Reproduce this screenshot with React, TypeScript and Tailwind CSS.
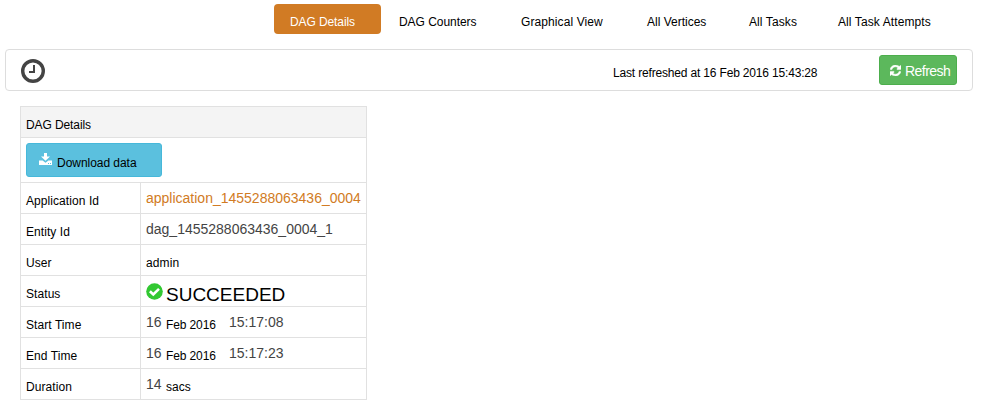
import type { ReactNode } from 'react';

const tabs = [
  { label: 'DAG Counters', box: 'w-[122px] pl-[18px] tracking-[-0.05px]' },
  { label: 'Graphical View', box: 'w-[126px] pl-[18px] tracking-[0.1px]' },
  { label: 'All Vertices', box: 'w-[102px] pl-[18px]' },
  { label: 'All Tasks', box: 'w-[89px] pl-[18px] tracking-[0.1px]' },
  { label: 'All Task Attempts', box: 'w-[120px] pl-[18px] tracking-[0.1px]' },
];

function ClockIcon() {
  return (
    <svg className="size-6" viewBox="0 0 24 24" fill="none" stroke="#444" strokeWidth="3.4">
      <circle cx="12" cy="12" r="10.3" />
      <path d="M13 6v8M8 13h6" strokeWidth="2" />
    </svg>
  );
}

function RefreshIcon() {
  return (
    <svg className="h-[11px] w-[11px]" viewBox="0 0 1536 1536" fill="currentColor" stroke="currentColor" strokeWidth="70">
      <path d="M1511 928q0 5-1 7-64 268-268 434.5t-478 166.5q-146 0-282.5-55t-243.5-157l-129 129q-19 19-45 19t-45-19-19-45v-448q0-26 19-45t45-19h448q26 0 45 19t19 45-19 45l-137 137q71 66 161 102t187 36q134 0 250-65t186-179q11-17 53-117 8-23 30-23h192q13 0 22.5 9.5t9.5 22.5zm25-800v448q0 26-19 45t-45 19h-448q-26 0-45-19t-19-45 19-45l138-138q-148-137-349-137-134 0-250 65t-186 179q-11 17-53 117-8 23-30 23h-199q-13 0-22.5-9.5t-9.5-22.5v-7q65-268 270-434.5t480-166.5q146 0 284 55.5t245 156.5l130-129q19-19 45-19t45 19 19 45z" />
    </svg>
  );
}

function DownloadIcon() {
  return (
    <svg className="h-3 w-[13px]" viewBox="0 0 13 12" fill="currentColor">
      <path d="M5 0h3v3.5h3L6.5 7.8 2 3.5h3z" />
      <path fillRule="evenodd" d="M0 7.5h3.6l2.9 2.3 2.9-2.3H13V12H0zM9 10v1h1v-1zm2 0v1h1v-1z" />
    </svg>
  );
}

function CheckIcon() {
  return (
    <svg className="size-[17px]" viewBox="0 0 17 17">
      <circle cx="8.5" cy="8.5" r="8.3" fill="#32c832" />
      <path d="M3.9 8.2l3.4 3.3 5.7-5.6" fill="none" stroke="#fff" strokeWidth="2.6" />
    </svg>
  );
}

function Row({ label, children }: { label: string; children: ReactNode }) {
  return (
    <div className="flex h-[31px] border-b border-[#e1e1e1]">
      <div className="w-[120px] border-r border-[#e1e1e1] pt-[11px] pl-[5px] tracking-[0.07px]">{label}</div>
      <div className="flex items-start pl-[5px]">{children}</div>
    </div>
  );
}

function Stamp({ time }: { time: string }) {
  return (
    <>
      <span className="w-5 pt-[7px] text-[14px] leading-4 text-[#444]">16</span>
      <span className="w-[63px] pt-[11px] tracking-[-0.12px]">Feb 2016</span>
      <span className="pt-[7px] text-[14px] leading-4 text-[#444]">{time}</span>
    </>
  );
}

export default function App() {
  return (
    <div className="h-[411px] w-[983px] overflow-hidden bg-white font-['Liberation_Sans',Arial,sans-serif] text-[12px] leading-[14px] whitespace-nowrap text-black">
      <nav className="flex h-[49px] pt-1 pl-[274px]">
        <div className="h-[30px] w-[107px] rounded bg-[#d17b24] pt-[11px] pl-4 tracking-[-0.1px] text-white">DAG Details</div>
        {tabs.map((tab) => (
          <div key={tab.label} className={`pt-[11px] ${tab.box}`}>{tab.label}</div>
        ))}
      </nav>
      <header className="ml-[5px] flex h-[42px] w-[968px] items-start rounded border border-[#ddd]">
        <div className="w-[607px] pt-[9px] pl-[15px]"><ClockIcon /></div>
        <div className="w-[266px] pt-4 tracking-[-0.17px]">Last refreshed at 16 Feb 2016 15:43:28</div>
        <button className="mt-[5px] flex h-[30px] w-[78px] items-start gap-1 rounded-[3px] border border-[#4cae4c] bg-[#5cb85c] pl-[10px] text-[14px] text-white">
          <span className="pt-[9px]"><RefreshIcon /></span>
          <span className="pt-2 tracking-[-0.55px]">Refresh</span>
        </button>
      </header>
      <main className="mt-[15px] ml-5 w-[347px] border border-b-0 border-[#e1e1e1]">
        <div className="h-[31px] border-b border-[#e1e1e1] bg-[#f4f4f4] pt-[11px] pl-[5px] tracking-[-0.1px]">DAG Details</div>
        <div className="h-[45px] border-b border-[#e1e1e1] pt-[5px] pl-[5px]">
          <button className="flex h-[34px] w-[136px] items-start rounded-[3px] border border-[#46b8da] bg-[#5bc0de] pl-3">
            <span className="mt-[9px] mr-[5px] text-white"><DownloadIcon /></span>
            <span className="pt-3 tracking-[-0.04px]">Download data</span>
          </button>
        </div>
        <Row label="Application Id"><span className="pt-[7px] text-[14px] leading-4 text-[#d17b24]">application_1455288063436_0004</span></Row>
        <Row label="Entity Id"><span className="pt-[7px] text-[14px] leading-4 text-[#444]">dag_1455288063436_0004_1</span></Row>
        <Row label="User"><span className="pt-[11px] tracking-[0.1px]">admin</span></Row>
        <Row label="Status">
          <span className="mt-[7px] mr-[3px]"><CheckIcon /></span>
          <span className="pt-2 text-[19px] leading-[22px]">SUCCEEDED</span>
        </Row>
        <Row label="Start Time"><Stamp time="15:17:08" /></Row>
        <Row label="End Time"><Stamp time="15:17:23" /></Row>
        <Row label="Duration">
          <span className="w-5 pt-[7px] text-[14px] leading-4 text-[#444]">14</span>
          <span className="pt-[11px]">sacs</span>
        </Row>
      </main>
    </div>
  );
}
